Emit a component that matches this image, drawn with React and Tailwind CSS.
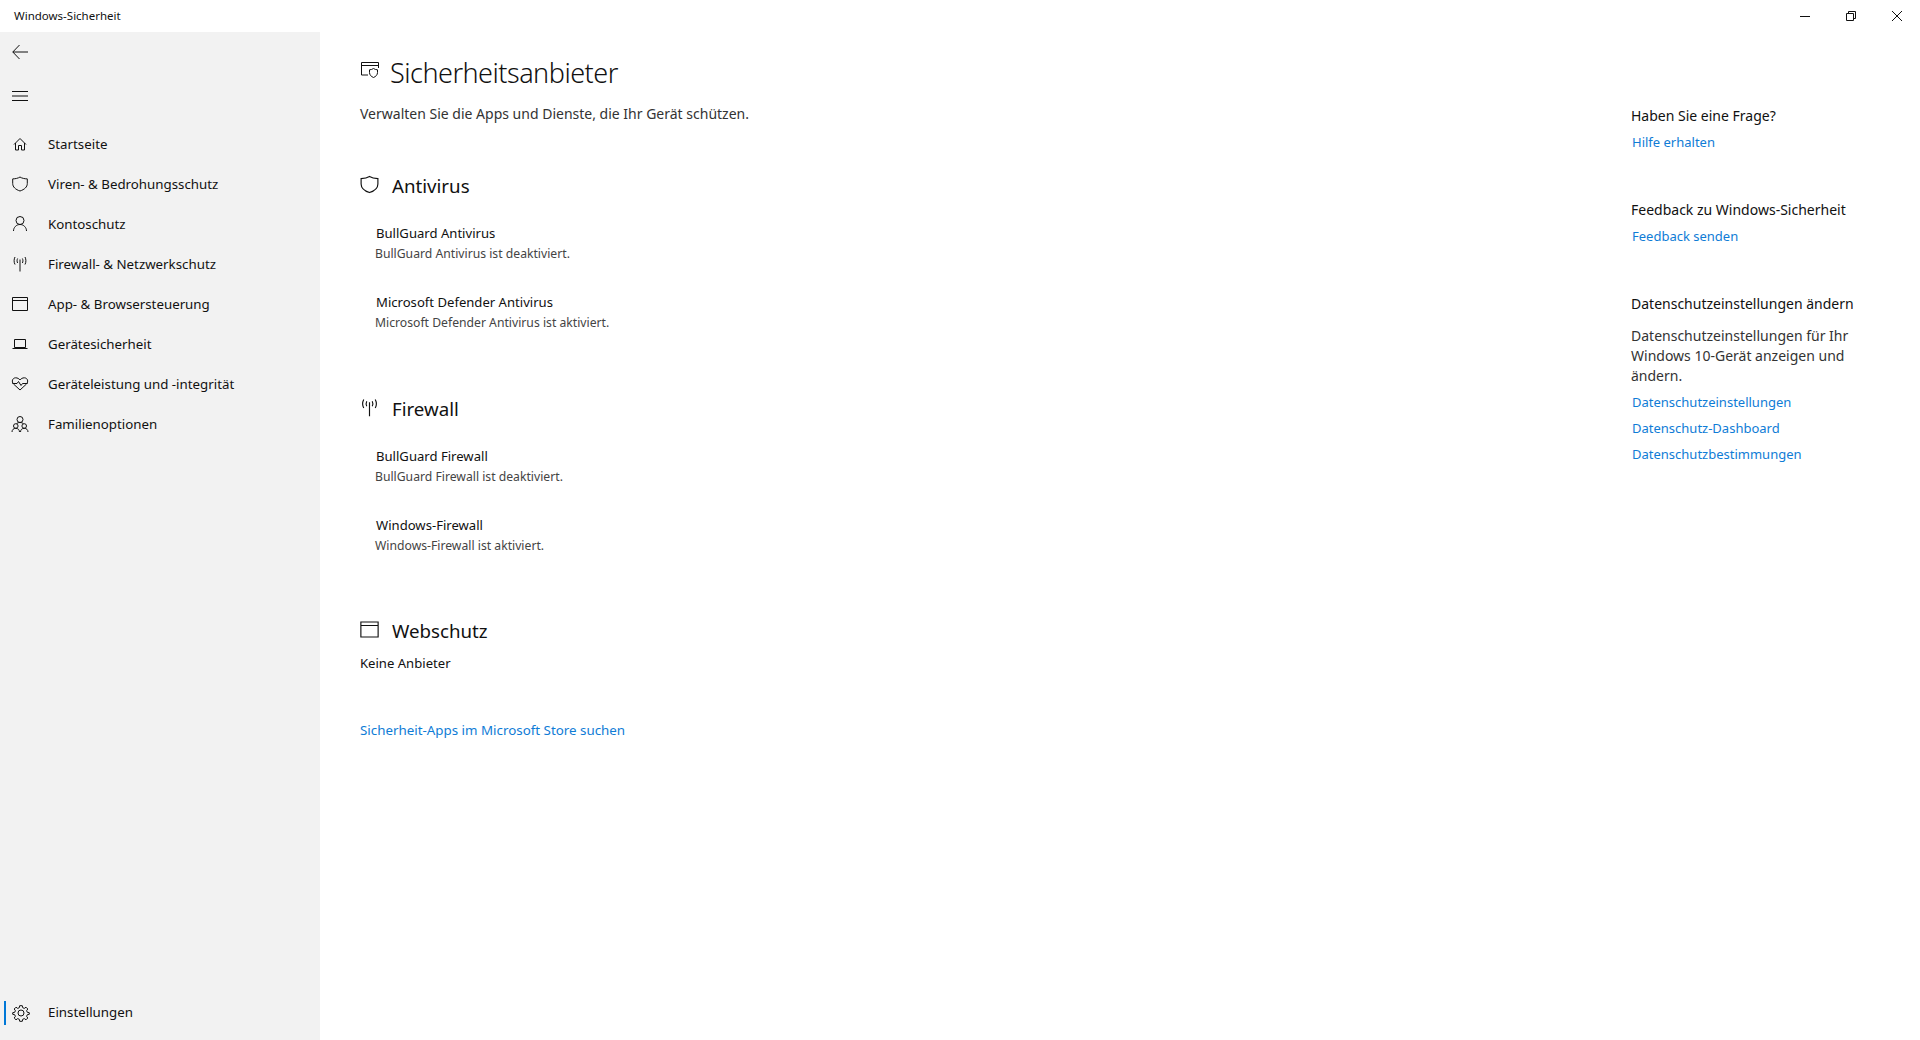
import React from 'react';

const Svg = ({ size = 20, className = '', children }) => (
  <svg width={size} height={size} viewBox="0 0 20 20" fill="none" stroke="currentColor" strokeWidth="1" className={className}>
    {children}
  </svg>
);

const ShieldIcon = (props) => (
  <Svg {...props}>
    <path d="M10 3C8 4.3 5.5 4.8 2.7 4.9V9.5C2.7 13 5.5 15.5 10 17C14.5 15.5 17.3 13 17.3 9.5V4.9C14.5 4.8 12 4.3 10 3Z" />
  </Svg>
);

const HomeIcon = (props) => (
  <Svg {...props}>
    <path d="M4 10.5L10 4.5L16 10.5M5.5 9V16H8.5V11.5H11.5V16H14.5V9" />
  </Svg>
);

const PersonIcon = (props) => (
  <Svg {...props}>
    <circle cx="10" cy="6.5" r="4" />
    <path d="M3.5 17C3.5 13.5 6.3 10.5 10 10.5C13.7 10.5 16.5 13.5 16.5 17" />
  </Svg>
);

const AntennaIcon = (props) => (
  <Svg {...props}>
    <path d="M10 5.5V17.5M7.6 4.5C6.9 6 6.9 7.6 7.6 9M12.4 4.5C13.1 6 13.1 7.6 12.4 9M5 3C3.8 5.3 3.8 8.2 5 10.5M15 3C16.2 5.3 16.2 8.2 15 10.5" />
  </Svg>
);

const WindowIcon = (props) => (
  <Svg {...props}>
    <path d="M2.5 3.5H17.5V16.5H2.5ZM2.5 6.5H17.5" />
  </Svg>
);

const LaptopIcon = (props) => (
  <Svg {...props}>
    <path d="M4.5 5.5H15.5V13.5H4.5ZM2.5 14.5H17.5" />
  </Svg>
);

const HeartIcon = (props) => (
  <Svg {...props}>
    <path d="M10 16L3.5 10C1.2 7.5 2.5 3.8 5.7 3.8C7.5 3.8 9 4.7 10 6C11 4.7 12.5 3.8 14.3 3.8C17.5 3.8 18.8 7.5 16.5 10L10 16Z" />
    <path d="M2.5 9.5H7L8.5 7.5L11 11.5L12.5 9.5H17.5" />
  </Svg>
);

const FamilyIcon = (props) => (
  <Svg {...props}>
    <circle cx="10" cy="5.5" r="3" />
    <circle cx="5.8" cy="12" r="2.3" />
    <circle cx="14.2" cy="12" r="2.3" />
    <path d="M2 18C2 15.8 3.5 14.3 5.8 14.3C8 14.3 9.5 15.8 9.5 18M10.5 18C10.5 15.8 12 14.3 14.2 14.3C16.5 14.3 18 15.8 18 18M6.5 10C7 9 8.3 8.5 10 8.5C11.7 8.5 13 9 13.5 10" />
  </Svg>
);

const GearIcon = (props) => (
  <Svg {...props}>
    <circle cx="10" cy="10" r="3" />
    <path d="M8.7 2.7H11.3L11.7 4.7L13.3 5.4L15 4.2L16.8 6L15.6 7.7L16.3 9.3L18.3 9.7V11.3L16.3 11.7L15.6 13.3L16.8 15L15 16.8L13.3 15.6L11.7 16.3L11.3 18.3H8.7L8.3 16.3L6.7 15.6L5 16.8L3.2 15L4.4 13.3L3.7 11.7L1.7 11.3V9.7L3.7 9.3L4.4 7.7L3.2 6L5 4.2L6.7 5.4L8.3 4.7Z" />
  </Svg>
);

const ProviderIcon = (props) => (
  <Svg {...props}>
    <path d="M8 15H1.5V2.5H18.5V8M1.5 5.5H18.5" />
    <path d="M13.5 8.5C12.3 9.4 11 9.7 9.5 9.8V12.5C9.5 15 11.2 16.5 13.5 17.5C15.8 16.5 17.5 15 17.5 12.5V9.8C16 9.7 14.7 9.4 13.5 8.5Z" />
  </Svg>
);

const navItems = [
  { label: 'Startseite', Icon: HomeIcon },
  { label: 'Viren- & Bedrohungsschutz', Icon: ShieldIcon },
  { label: 'Kontoschutz', Icon: PersonIcon },
  { label: 'Firewall- & Netzwerkschutz', Icon: AntennaIcon },
  { label: 'App- & Browsersteuerung', Icon: WindowIcon },
  { label: 'Gerätesicherheit', Icon: LaptopIcon },
  { label: 'Geräteleistung und -integrität', Icon: HeartIcon },
  { label: 'Familienoptionen', Icon: FamilyIcon },
];

function Link({ children, className = '' }) {
  return <a className={`block text-[#0f7cd6] ${className}`}>{children}</a>;
}

function Provider({ name, status }) {
  return (
    <div className="h-[69px] pl-4">
      <div className="h-[19px] text-[13.1px] leading-[19px] text-[#111]">{name}</div>
      <div className="mt-px -ml-px h-[19px] text-[12.2px] leading-[19px] text-[#444]">{status}</div>
    </div>
  );
}

function SectionTitle({ Icon, children }) {
  return (
    <div className="flex h-7 items-center text-[#111]">
      <Icon size={23} className="-mt-1 -ml-[2px] shrink-0" />
      <span className="ml-[11px] text-[18.7px] leading-7">{children}</span>
    </div>
  );
}

export default function App() {
  return (
    <div className="flex h-[1040px] w-[1920px] flex-col overflow-hidden bg-white font-['Noto_Sans',sans-serif] text-[14px] text-[#111]">
      {/* title bar */}
      <div className="flex h-8 shrink-0 items-center justify-between pl-[14px]">
        <span className="text-[11.5px]">Windows-Sicherheit</span>
        <div className="flex items-center gap-[36px] pr-[18px]">
          <svg width="10" height="10" viewBox="0 0 10 10" stroke="currentColor"><path d="M0 5.5H10" /></svg>
          <svg width="10" height="10" viewBox="0 0 10 10" fill="none" stroke="currentColor"><path d="M.5 2.5H7.5V9.5H.5ZM2.5 2.5V.5H9.5V7.5H7.5" /></svg>
          <svg width="10" height="10" viewBox="0 0 10 10" stroke="currentColor"><path d="M0 0L10 10M10 0L0 10" /></svg>
        </div>
      </div>

      <div className="flex min-h-0 flex-1">
        {/* sidebar */}
        <aside className="flex w-[320px] shrink-0 flex-col bg-[#f2f2f2]">
          <div className="flex h-10 items-center pl-3">
            <svg width="16" height="16" viewBox="0 0 16 16" fill="none" stroke="currentColor"><path d="M16 8H.8M7.5 1L.8 8L7.5 15" /></svg>
          </div>
          <div className="mt-1 flex h-10 items-center pl-3">
            <svg width="16" height="16" viewBox="0 0 16 16" stroke="currentColor"><path d="M0 3.5H16M0 8H16M0 12.5H16" /></svg>
          </div>
          <nav className="mt-[9px] flex flex-col">
            {navItems.map(({ label, Icon }) => (
              <div key={label} className="flex h-10 items-center pl-[10px]">
                <Icon size={20} className="-mt-0.5 shrink-0" />
                <span className="ml-[18px] text-[13.3px]">{label}</span>
              </div>
            ))}
          </nav>
          <div className="mt-auto mb-[7px] flex h-10 items-center">
            <div className="ml-1 h-6 w-[2px] bg-[#0078d7]" />
            <GearIcon size={20} className="ml-[5px] shrink-0" />
            <span className="ml-[17px] text-[13.3px]">Einstellungen</span>
          </div>
        </aside>

        {/* main */}
        <main className="flex min-w-0 flex-1 pl-10">
          <div className="flex-1 pt-5">
            <div className="flex h-10 items-center">
              <ProviderIcon size={20} className="-mt-1 shrink-0" />
              <h1 className="mt-[2px] ml-[10px] text-[27px] leading-10 font-light tracking-[-0.5px]">Sicherheitsanbieter</h1>
            </div>
            <p className="mt-[12px] text-[14px] leading-5 text-[#333]">Verwalten Sie die Apps und Dienste, die Ihr Gerät schützen.</p>

            <section className="mt-[48px]">
              <SectionTitle Icon={ShieldIcon}>Antivirus</SectionTitle>
              <div className="mt-[24px]">
                <Provider name="BullGuard Antivirus" status="BullGuard Antivirus ist deaktiviert." />
                <Provider name="Microsoft Defender Antivirus" status="Microsoft Defender Antivirus ist aktiviert." />
              </div>
            </section>

            <section className="mt-[33px]">
              <SectionTitle Icon={AntennaIcon}>Firewall</SectionTitle>
              <div className="mt-[24px]">
                <Provider name="BullGuard Firewall" status="BullGuard Firewall ist deaktiviert." />
                <Provider name="Windows-Firewall" status="Windows-Firewall ist aktiviert." />
              </div>
            </section>

            <section className="mt-[32px]">
              <SectionTitle Icon={WindowIcon}>Webschutz</SectionTitle>
              <div className="mt-[8px] text-[13.1px] leading-5">Keine Anbieter</div>
            </section>

            <Link className="mt-[47px] text-[13.35px] leading-5">Sicherheit-Apps im Microsoft Store suchen</Link>
          </div>

          {/* right column */}
          <div className="w-[289px] shrink-0 pt-[74px]">
            <h2 className="leading-5">Haben Sie eine Frage?</h2>
            <Link className="mt-[6px] ml-px text-[13px] leading-5">Hilfe erhalten</Link>
            <h2 className="mt-[48px] leading-5">Feedback zu Windows-Sicherheit</h2>
            <Link className="mt-[6px] ml-px text-[13px] leading-5">Feedback senden</Link>
            <h2 className="mt-[48px] leading-5">Datenschutzeinstellungen ändern</h2>
            <p className="mt-3 w-[230px] leading-5 text-[#333]">Datenschutzeinstellungen für Ihr Windows 10-Gerät anzeigen und ändern.</p>
            <Link className="mt-[6px] ml-px text-[13px] leading-5">Datenschutzeinstellungen</Link>
            <Link className="mt-[6px] ml-px text-[13px] leading-5">Datenschutz-Dashboard</Link>
            <Link className="mt-[6px] ml-px text-[13px] leading-5">Datenschutzbestimmungen</Link>
          </div>
        </main>
      </div>
    </div>
  );
}
